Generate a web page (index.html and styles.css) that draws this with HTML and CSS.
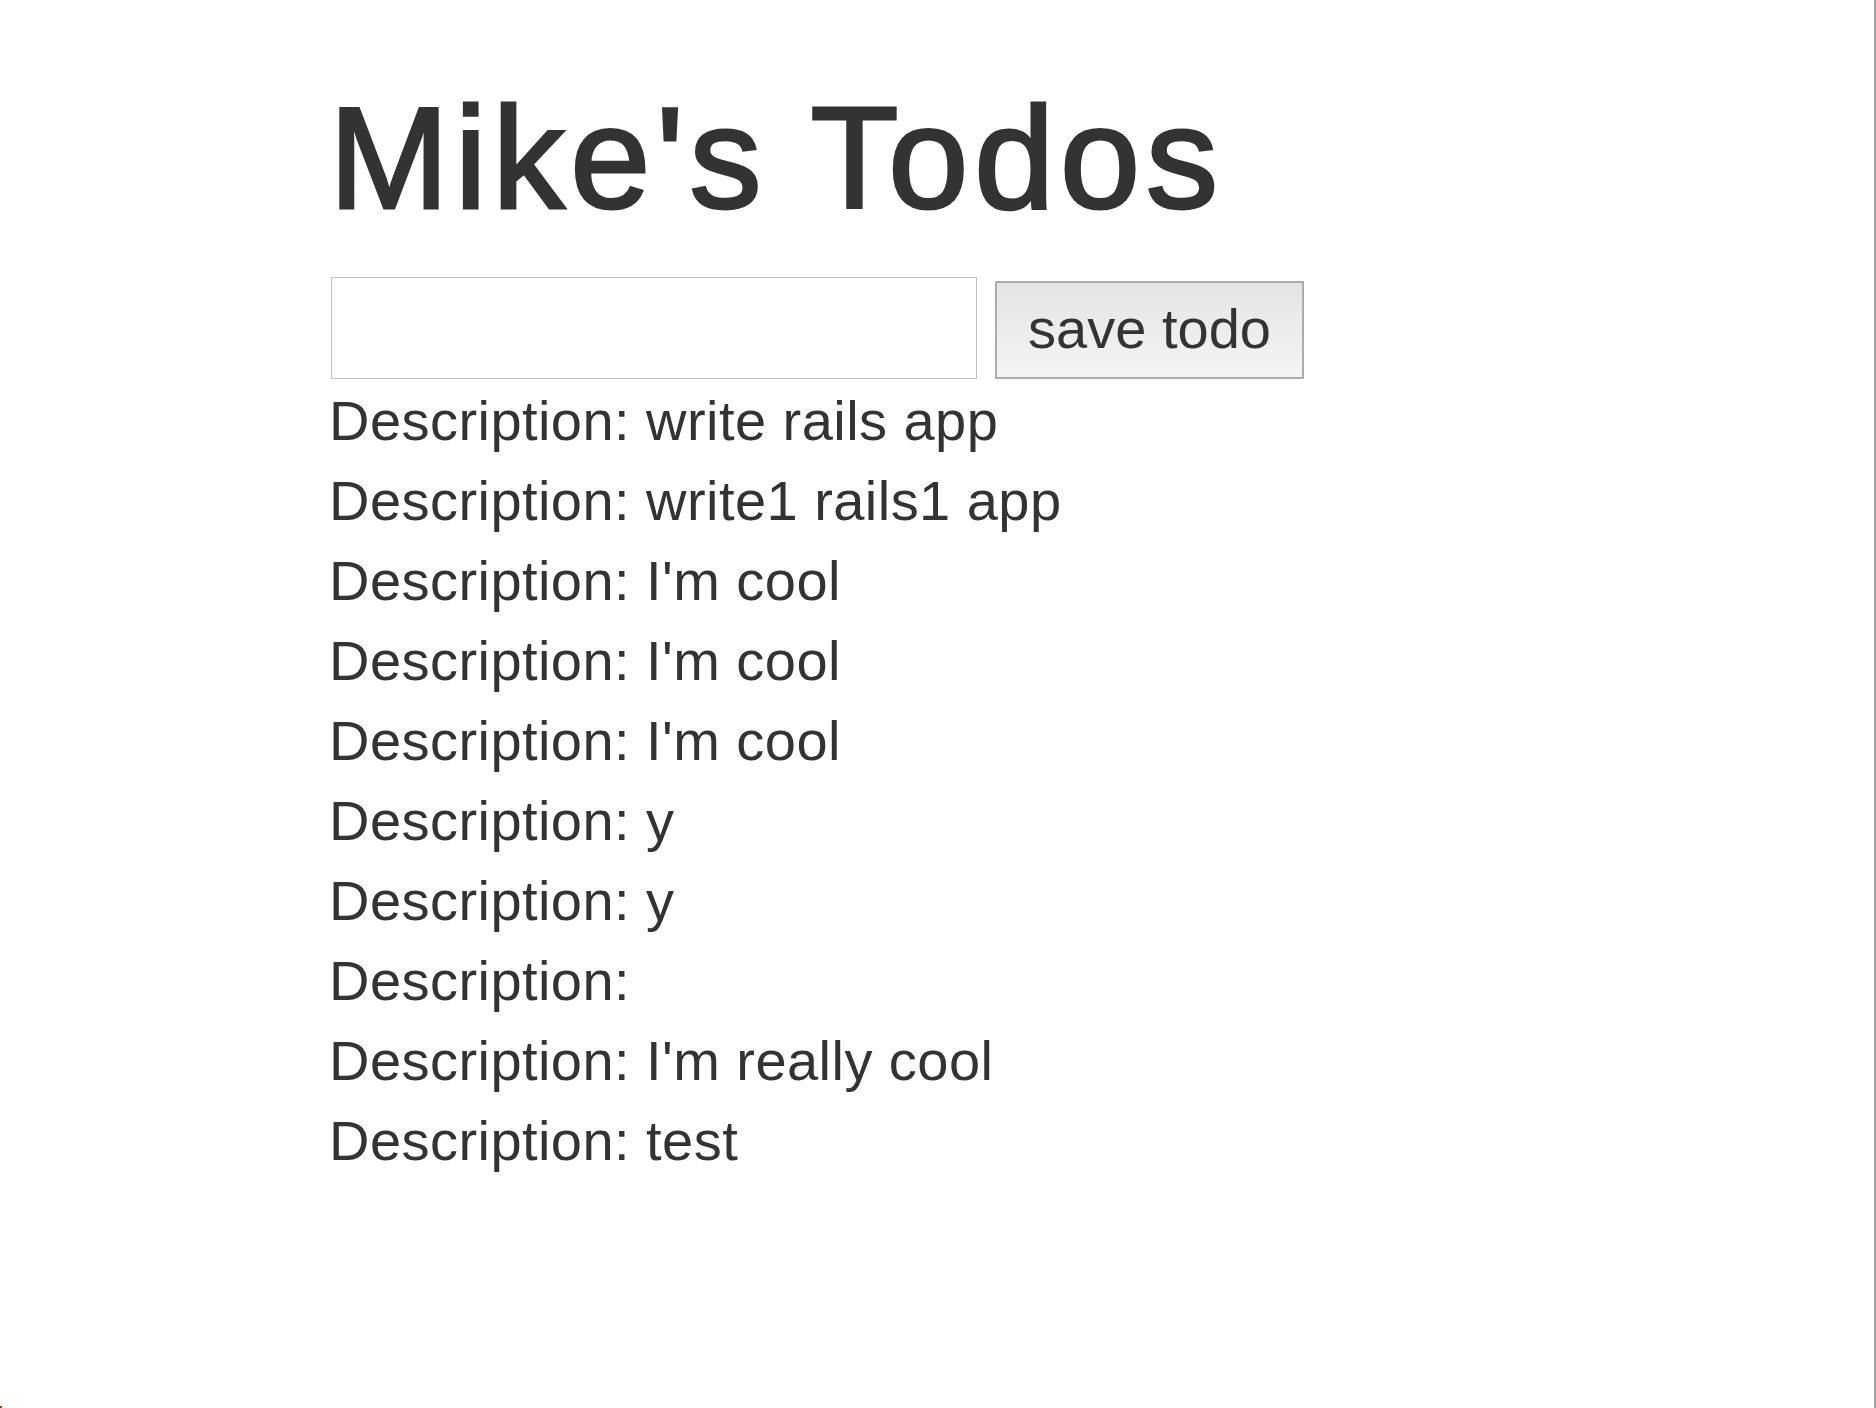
FILE: index.html
```html
<!DOCTYPE html>
<html lang="en">
<head>
<meta charset="utf-8">
<title>Mike's Todos</title>
<link rel="stylesheet" href="styles.css">
</head>
<body>
<div class="page">
  <div class="container">
    <h1 class="title">Mike's Todos</h1>
    <form class="todo-form" onsubmit="return false;">
      <input class="todo-input" type="text" aria-label="todo description">
      <button class="save-btn" type="submit">save todo</button>
    </form>
    <div class="todo-list">
      <div class="todo">Description: write rails app</div>
      <div class="todo">Description: write1 rails1 app</div>
      <div class="todo">Description: I'm cool</div>
      <div class="todo">Description: I'm cool</div>
      <div class="todo">Description: I'm cool</div>
      <div class="todo">Description: y</div>
      <div class="todo">Description: y</div>
      <div class="todo">Description: </div>
      <div class="todo">Description: I'm really cool</div>
      <div class="todo">Description: test</div>
    </div>
  </div>
  <span class="corner-mark"></span>
</div>
</body>
</html>
```

FILE: styles.css
```css
html, body {
  margin: 0;
  padding: 0;
  background: #ffffff;
}

body {
  font-family: "Liberation Sans", Arial, Helvetica, sans-serif;
  color: #333333;
}

.page {
  box-sizing: border-box;
  width: 100%;
  height: 1408px;
  border-right: 2px solid #a0a0a0;
  overflow: hidden;
}

.container {
  padding-left: 329px;
}

.title {
  margin: 80px 0 39px 0;
  font-size: 144px;
  line-height: 158px;
  font-weight: 400;
  letter-spacing: 5.8px;
  color: #333333;
  -webkit-text-stroke: 3px #333333;
}

.todo-form {
  display: flex;
  align-items: flex-start;
  gap: 18px;
  margin: 0;
}

.todo-input {
  box-sizing: border-box;
  width: 646px;
  height: 102px;
  margin: 0 0 0 2px;
  padding: 0 12px;
  border: 1px solid #c2c2c2;
  border-radius: 0;
  background: #ffffff;
  font-family: inherit;
  font-size: 56px;
  color: #333333;
  outline: none;
}

.save-btn {
  box-sizing: border-box;
  width: 309px;
  height: 98px;
  margin-top: 4px;
  padding: 6px 0 8px 0;
  border: 2px solid #acacac;
  border-radius: 0;
  background: linear-gradient(to bottom, #e4e4e4 0%, #f5f5f5 100%);
  font-family: "Liberation Sans", Arial, Helvetica, sans-serif;
  font-size: 56px;
  line-height: 80px;
  color: #333333;
  text-align: center;
}

.todo-list {
  display: flex;
  flex-direction: column;
  margin-top: 2px;
}

.todo {
  font-size: 56px;
  line-height: 80px;
  letter-spacing: 0.45px;
  white-space: pre;
  height: 80px;
}

.corner-mark {
  position: fixed;
  left: 0;
  bottom: 0;
  width: 2px;
  height: 2px;
  background: #7d4a2c;
}
```
